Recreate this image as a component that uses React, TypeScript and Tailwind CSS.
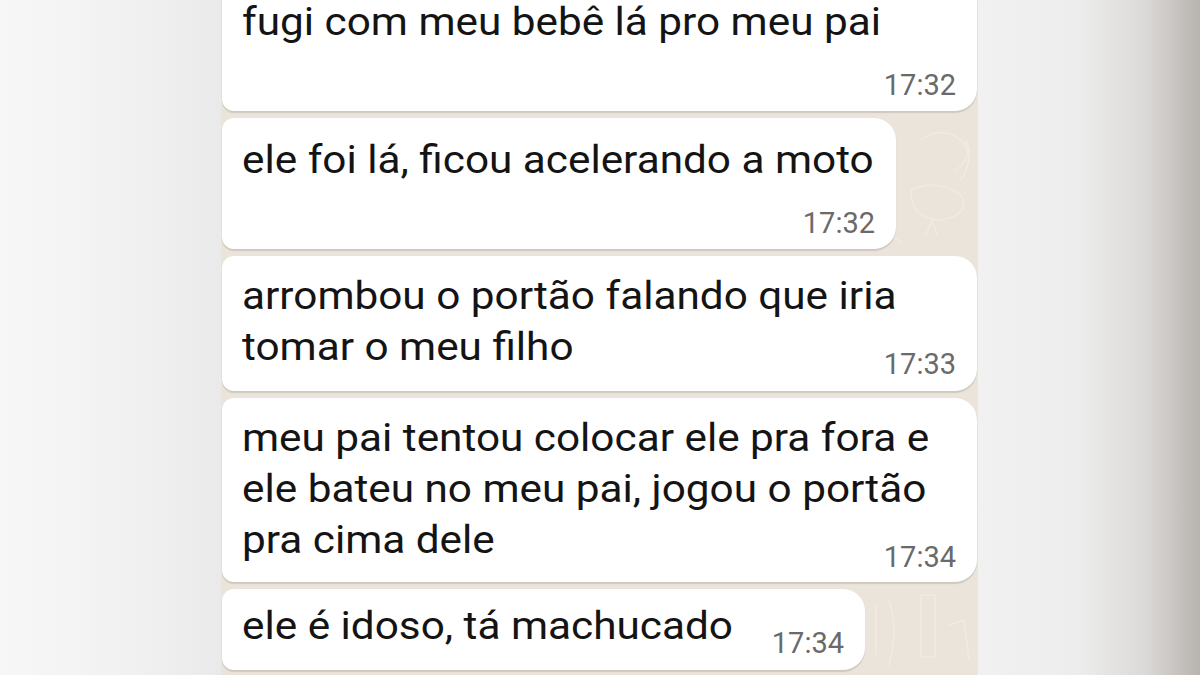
import React from "react";

type Msg = {
  lines: string[];
  time: string;
  mode: "inline" | "newline";
  width: string;
  pt: string;
  pb: string;
};

const msgs: Msg[] = [
  { lines: ["fugi com meu bebê lá pro meu pai"], time: "17:32", mode: "newline", width: "w-[755px]", pt: "pt-[16.5px]", pb: "pb-[11.5px]" },
  { lines: ["ele foi lá, ficou acelerando a moto"], time: "17:32", mode: "newline", width: "w-[674px]", pt: "pt-[16.5px]", pb: "pb-[11.5px]" },
  { lines: ["arrombou o portão falando que iria", "tomar o meu filho"], time: "17:33", mode: "inline", width: "w-[755px]", pt: "pt-[15px]", pb: "pb-[18px]" },
  { lines: ["meu pai tentou colocar ele pra fora e", "ele bateu no meu pai, jogou o portão", "pra cima dele"], time: "17:34", mode: "inline", width: "w-[755px]", pt: "pt-[15px]", pb: "pb-[16px]" },
  { lines: ["ele é idoso, tá machucado"], time: "17:34", mode: "inline", width: "w-[643px]", pt: "pt-[12px]", pb: "pb-[17.5px]" },
];

function Time({ t, extra }: { t: string; extra?: string }) {
  return (
    <span className={"text-[29px] leading-[29px] text-[#6a6a6a] whitespace-nowrap " + (extra ?? "")}>{t}</span>
  );
}

function Line({ text }: { text: string }) {
  return (
    <div className="text-[38px] leading-[51px] whitespace-nowrap">
      <span className="inline-block origin-left scale-x-[1.113]">{text}</span>
    </div>
  );
}

function Bubble({ m }: { m: Msg }) {
  const base =
    "bg-white rounded-l-[12px] rounded-r-[22px] pl-[20px] pr-[21px] shadow-[0_1.5px_1px_rgba(0,0,0,0.12)] " +
    m.width +
    " " +
    m.pt +
    " " +
    m.pb;
  if (m.mode === "newline") {
    return (
      <div className={base}>
        {m.lines.map((l, i) => (
          <Line key={i} text={l} />
        ))}
        <div className="flex justify-end mt-[23px]">
          <Time t={m.time} />
        </div>
      </div>
    );
  }
  const head = m.lines.slice(0, -1);
  const last = m.lines[m.lines.length - 1];
  return (
    <div className={base}>
      {head.map((l, i) => (
        <Line key={i} text={l} />
      ))}
      <div className="flex items-end justify-between gap-[20px]">
        <Line text={last} />
        <Time t={m.time} extra="mb-[-6px]" />
      </div>
    </div>
  );
}

function Doodles() {
  return (
    <svg className="absolute inset-0 w-full h-full opacity-60" viewBox="0 0 757 675" fill="none" stroke="#f5f0e9" strokeWidth="1.5" strokeLinecap="round">
      <path d="M700 140 q20 -15 40 0 q15 15 -5 30" />
      <path d="M690 190 q25 -12 50 5 q10 20 -20 25 q-30 0 -30 -30z" />
      <path d="M705 235 l6 -14 l5 14" />
      <path d="M655 605 l0 50 M668 600 q10 30 0 65" />
      <path d="M700 595 l14 0 l0 62 l-14 0 z" />
      <path d="M728 625 l15 -5 l5 40" />
      <path d="M745 140 q8 20 -5 40" />
      <path d="M650 240 q15 -10 30 2" />
    </svg>
  );
}

export default function App() {
  return (
    <div
      className="w-[1200px] h-[675px] overflow-hidden flex text-[#141414]"
      style={{ fontFamily: "Roboto, 'Noto Sans', sans-serif" }}
    >
      <div className="w-[221px] h-full bg-[linear-gradient(to_right,#f7f7f7_0%,#f1f1f1_60%,#eaeaea_100%)]" />
      <div className="relative w-[757px] h-full bg-[#ebe4da] overflow-hidden">
        <Doodles />
        <div className="relative flex flex-col gap-[7px] pl-[1px] mt-[-20px]">
          {msgs.map((m, i) => (
            <Bubble key={i} m={m} />
          ))}
        </div>
      </div>
      <div className="flex-1 h-full bg-[linear-gradient(to_right,#f1f1f1_0%,#ededed_45%,#dcdad8_75%,#b7b3af_100%)]" />
    </div>
  );
}
